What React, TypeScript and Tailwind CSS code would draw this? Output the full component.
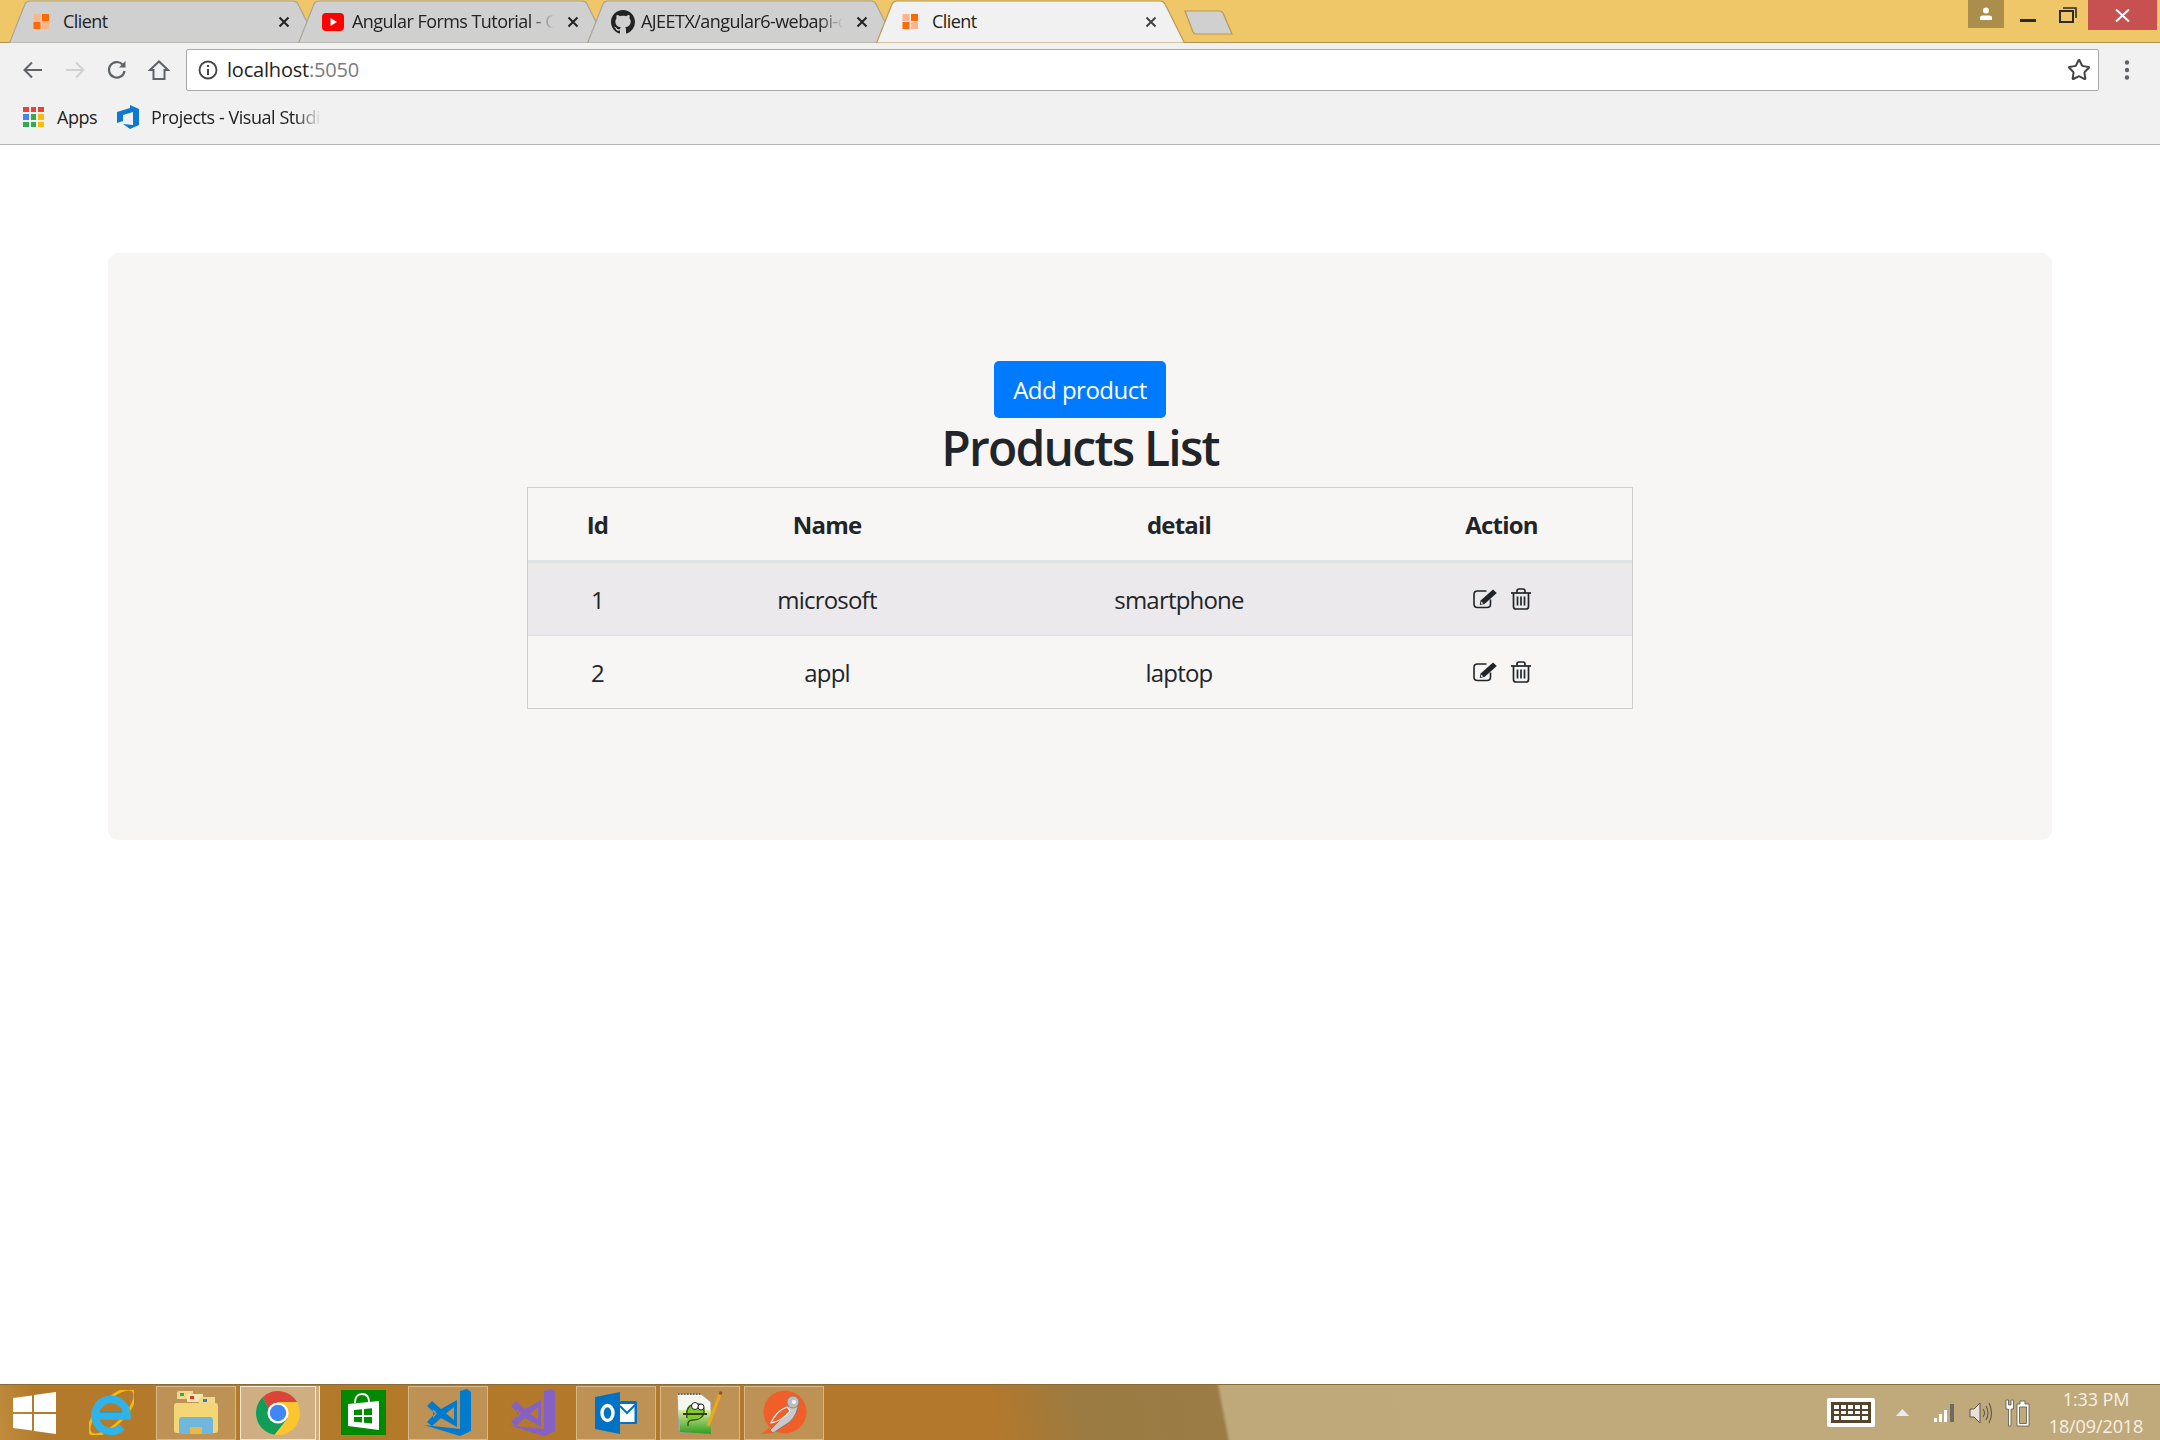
import { Star } from 'lucide-react';

const font = "font-['Open_Sans','Noto_Sans',sans-serif]";

function TabShape({ active }: { active?: boolean }) {
  return (
    <svg className="absolute inset-0 h-[43px] w-[309px]" viewBox="0 0 309 43">
      <path
        d="M0.5 43 L16 4 Q17.5 1 21 1 L284 1 Q287.5 1 289 4 L308.5 43 Z"
        fill={active ? '#f1f1f1' : '#d0d0d0'}
        stroke={active ? '#b79a52' : '#a9a49a'}
        strokeWidth="1.2"
      />
    </svg>
  );
}

function GridFavicon() {
  return (
    <svg width="17" height="15" viewBox="0 0 17 15">
      <rect x="0.5" y="0" width="7" height="7" fill="#ffb48a" />
      <rect x="9" y="0" width="7" height="7" fill="#ff6a00" />
      <rect x="0.5" y="8" width="7" height="7" fill="#ff6a00" />
      <rect x="9" y="8" width="7" height="7" fill="#ffb48a" />
    </svg>
  );
}

function YoutubeFavicon() {
  return (
    <svg width="22" height="18" viewBox="0 0 22 18">
      <rect x="0" y="0" width="22" height="18" rx="4" fill="#f00" />
      <path d="M8.5 5 L15 9 L8.5 13 Z" fill="#fff" />
    </svg>
  );
}

function GithubFavicon() {
  return (
    <svg width="24" height="24" viewBox="0 0 16 16" fill="#222">
      <path d="M8 0C3.58 0 0 3.58 0 8c0 3.54 2.29 6.53 5.47 7.59.4.07.55-.17.55-.38 0-.19-.01-.82-.01-1.49-2.01.37-2.53-.49-2.69-.94-.09-.23-.48-.94-.82-1.13-.28-.15-.68-.52-.01-.53.63-.01 1.08.58 1.23.82.72 1.21 1.87.87 2.33.66.07-.52.28-.87.51-1.07-1.78-.2-3.64-.89-3.64-3.95 0-.87.31-1.59.82-2.15-.08-.2-.36-1.02.08-2.12 0 0 .67-.21 2.2.82.64-.18 1.32-.27 2-.27s1.36.09 2 .27c1.53-1.04 2.2-.82 2.2-.82.44 1.1.16 1.92.08 2.12.51.56.82 1.27.82 2.15 0 3.07-1.87 3.75-3.65 3.95.29.25.54.73.54 1.48 0 1.07-.01 1.93-.01 2.2 0 .21.15.46.55.38A8.01 8.01 0 0 0 16 8c0-4.42-3.58-8-8-8z" />
    </svg>
  );
}

function CloseX({ color = '#222' }: { color?: string }) {
  return (
    <svg width="12" height="12" viewBox="0 0 12 12">
      <path d="M1.5 1.5 L10.5 10.5 M10.5 1.5 L1.5 10.5" stroke={color} strokeWidth="2" />
    </svg>
  );
}

function Tab({
  icon,
  title,
  active,
  fade,
  first,
}: {
  icon: React.ReactNode;
  title: string;
  active?: boolean;
  fade?: boolean;
  first?: boolean;
}) {
  return (
    <div className={`relative h-[43px] w-[309px] shrink-0 ${first ? '' : '-ml-[20px]'} ${active ? 'z-10' : ''}`}>
      <TabShape active={active} />
      <div className={`relative flex h-[43px] items-center pr-[28px] ${active ? 'pl-[26px]' : 'pl-[24px]'}`}>
        <div className="flex w-[30px] shrink-0 items-center">{icon}</div>
        <span
          className={`w-[202px] overflow-hidden whitespace-nowrap text-[18px] tracking-[-0.55px] text-[#222] ${fade ? 'mask-r-from-88%' : ''}`}
        >
          {title}
        </span>
        <div className="ml-auto flex">
          <CloseX color={active ? '#444' : '#222'} />
        </div>
      </div>
    </div>
  );
}

function TitleBar() {
  return (
    <div className="flex h-[43px] border-b border-[#b3944e] bg-[#efc768] pl-[9px]">
      <Tab first icon={<GridFavicon />} title="Client" />
      <Tab icon={<YoutubeFavicon />} title="Angular Forms Tutorial - Create" fade />
      <Tab icon={<GithubFavicon />} title="AJEETX/angular6-webapi-client" fade />
      <Tab active icon={<GridFavicon />} title="Client" />
      <svg className="-ml-[2px] mt-[10px] shrink-0" width="50" height="26" viewBox="0 0 50 26">
        <path
          d="M2 1 L37 1 Q39 1 40 3 L49 24 L13 24 Q11 24 10 22 Z"
          fill="#d0d0d0"
          stroke="#b79a52"
          strokeWidth="1.2"
        />
      </svg>
      <div className="ml-auto flex h-[30px] items-start">
        <div className="flex h-[28px] w-[36px] items-center justify-center bg-[#ab8e4c]">
          <svg width="14" height="14" viewBox="0 0 14 14" fill="#fff">
            <circle cx="7" cy="3.5" r="3" />
            <path d="M1 13 L1 10.5 Q1 8.5 4 8.5 L10 8.5 Q13 8.5 13 10.5 L13 13 Z" />
          </svg>
        </div>
        <div className="flex h-[30px] w-[48px] items-center justify-center pt-[10px]">
          <div className="h-[3px] w-[16px] bg-[#2b2b2b]" />
        </div>
        <div className="flex h-[30px] w-[36px] items-center pl-[7px]">
          <svg width="18" height="16" viewBox="0 0 18 16" fill="none" stroke="#2b2b2b">
            <rect x="1" y="4" width="13" height="11" strokeWidth="2" />
            <path d="M4 1 L17 1 L17 11" strokeWidth="1.6" />
          </svg>
        </div>
        <div className="mr-[3px] flex h-[30px] w-[69px] items-center justify-center bg-[#c75050]">
          <svg width="15" height="13" viewBox="0 0 15 13">
            <path d="M1 0.5 L14 12.5 M14 0.5 L1 12.5" stroke="#fff" strokeWidth="2" />
          </svg>
        </div>
      </div>
    </div>
  );
}

function AddressRow() {
  return (
    <div className="flex h-[53px] items-center pl-[21px] pr-[29px]">
      <svg width="24" height="24" viewBox="0 0 24 24" fill="none" stroke="#5f6368" strokeWidth="2">
        <path d="M21 12 H4 M11 4.5 L3.5 12 L11 19.5" />
      </svg>
      <svg className="ml-[18px]" width="24" height="24" viewBox="0 0 24 24" fill="none" stroke="#cfd0d1" strokeWidth="2">
        <path d="M3 12 H20 M13 4.5 L20.5 12 L13 19.5" />
      </svg>
      <svg className="ml-[18px]" width="24" height="24" viewBox="0 0 24 24" fill="none" stroke="#5f6368" strokeWidth="2.2">
        <path d="M19.5 13 A7.8 7.8 0 1 1 17.5 6.5" />
        <path d="M20.5 3 V9.5 H14 Z" fill="#5f6368" stroke="none" />
      </svg>
      <svg className="ml-[19px]" width="22" height="22" viewBox="0 0 22 22" fill="none" stroke="#5f6368" strokeWidth="2">
        <path d="M2 11 L11 2.5 L20 11 H16.5 V20 H5.5 V11 Z" />
      </svg>
      <div className="ml-[16px] flex h-[42px] flex-1 items-center rounded-[2px] border border-[#a9a9a9] bg-white pl-[11px] pr-[7px]">
        <svg width="20" height="20" viewBox="0 0 20 20" fill="none" stroke="#444">
          <circle cx="10" cy="10" r="8.5" strokeWidth="1.8" />
          <path d="M10 9 V15 M10 5 V7" strokeWidth="2" />
        </svg>
        <span className="ml-[9px] text-[20px] tracking-[-0.2px] text-[#222]">
          localhost<span className="text-[#7b7b7b]">:5050</span>
        </span>
        <Star className="ml-auto text-[#444]" size={24} strokeWidth={2} />
      </div>
      <svg className="ml-[24px]" width="8" height="24" viewBox="0 0 8 24" fill="#5f6368">
        <circle cx="4" cy="4.5" r="2.2" />
        <circle cx="4" cy="12" r="2.2" />
        <circle cx="4" cy="19.5" r="2.2" />
      </svg>
    </div>
  );
}

function BookmarksRow() {
  const dots = ['#ea4335', '#ea4335', '#ea4335', '#4285f4', '#34a853', '#fbbc05', '#34a853', '#34a853', '#fbbc05'];
  return (
    <div className="flex h-[49px] items-center border-b border-[#b5b5b5] pb-[6px] pl-[23px]">
      <div className="grid w-[21px] grid-cols-3 gap-[2px]">
        {dots.map((c, i) => (
          <span key={i} className="h-[5.5px] w-[5.5px]" style={{ background: c }} />
        ))}
      </div>
      <span className="ml-[13px] text-[18px] tracking-[-0.5px] text-[#222]">Apps</span>
      <svg className="ml-[19px]" width="24" height="24" viewBox="0 0 24 24" fill="#0f78d4">
        <path d="M14 0 L23 4 V20 L14 24 L7 19 L17 20 V7 L7 10 V16 L1 18 V7 L14 3 Z" />
      </svg>
      <span className="ml-[11px] w-[170px] overflow-hidden whitespace-nowrap text-[18px] tracking-[-0.45px] text-[#222] mask-r-from-85%">
        Projects - Visual Studio Team Services
      </span>
    </div>
  );
}

function EditIcon() {
  return (
    <svg width="24" height="20" viewBox="0 0 24 20" className="ml-[1px] shrink-0">
      <path
        d="M13.5 2 H4.5 Q1 2 1 5.5 V15 Q1 18.5 4.5 18.5 H14 Q17.5 18.5 17.5 15 V10.5"
        fill="none"
        stroke="#212529"
        strokeWidth="1.6"
      />
      <path d="M20 0.5 L23.8 4 L11.5 15 L6.8 16 L7.6 11.5 Z" fill="#212529" />
      <path d="M8.3 12.6 L8 14.9 L10.4 14.4 Z" fill="#f7f6f5" />
    </svg>
  );
}

function TrashIcon() {
  return (
    <svg width="20" height="22" viewBox="0 0 20 22" fill="none" stroke="#212529" strokeWidth="1.7" className="shrink-0">
      <path d="M0 5 H20" />
      <path d="M6 5 V3 Q6 1 8 1 H12 Q14 1 14 3 V5" />
      <path d="M2.5 5 V18.5 Q2.5 21 5 21 H15 Q17.5 21 17.5 18.5 V5" />
      <path d="M6.5 8.5 V17.5 M10 8.5 V17.5 M13.5 8.5 V17.5" />
    </svg>
  );
}

function ProductRow({ id, name, detail, striped }: { id: number; name: string; detail: string; striped?: boolean }) {
  return (
    <div
      className={`grid grid-cols-[139px_320px_384px_1fr] items-center text-center ${
        striped ? 'h-[73px] border-b border-[#dee2e6] bg-[#ebe9eb]' : 'h-[72px]'
      }`}
    >
      <span className="mt-[2px]">{id}</span>
      <span className="mt-[2px]">{name}</span>
      <span className="mt-[2px]">{detail}</span>
      <div className="flex items-center justify-center gap-[14px]">
        <EditIcon />
        <TrashIcon />
      </div>
    </div>
  );
}

function Content() {
  return (
    <div className="px-[108px] pt-[108px]">
      <div className="flex h-[587px] flex-col items-center rounded-[10px] bg-[#f7f6f5] pt-[108px] text-[24px] tracking-[-0.8px] text-[#212529]">
        <button className="h-[57px] w-[172px] rounded-[5px] bg-[#007bff] pt-[1px] tracking-[-0.5px] text-white">Add product</button>
        <h2 className="mt-[1px] h-[68px] text-[48px] leading-[58px] font-semibold tracking-[-1.75px]">Products List</h2>
        <div className="w-[1106px] border border-[#cfcfcf]">
          <div className="grid h-[75px] grid-cols-[139px_320px_384px_1fr] items-center border-b-[3px] border-[#dee2e6] pt-[2px] text-center font-bold">
            <span>Id</span>
            <span>Name</span>
            <span>detail</span>
            <span>Action</span>
          </div>
          <ProductRow id={1} name="microsoft" detail="smartphone" striped />
          <ProductRow id={2} name="appl" detail="laptop" />
        </div>
      </div>
    </div>
  );
}

function Tile({ children }: { children: React.ReactNode }) {
  return (
    <div className="flex h-[54px] w-[80px] shrink-0 items-center justify-center border border-[#d8b98a] bg-[#bd9254]">
      {children}
    </div>
  );
}

function IeIcon() {
  return (
    <svg className="ml-[33px] shrink-0" width="45" height="45" viewBox="0 0 45 45" fill="none">
      <ellipse cx="23" cy="22" rx="30" ry="12" transform="rotate(-45 23 22)" stroke="#f2b90f" strokeWidth="2.8" />
      <path d="M6 26 H38 A16 16 0 1 0 33 37" stroke="#2fb3e8" strokeWidth="7.5" />
      <path d="M11 22 H33" stroke="#1b9bd6" strokeWidth="1.5" />
    </svg>
  );
}

function ExplorerIcon() {
  return (
    <svg width="46" height="45" viewBox="0 0 46 45">
      <path d="M4 9 V3 Q4 1 6 1 H20 V9 Z" fill="#f1d98c" />
      <path d="M14 12 V6 Q14 4 16 4 H30 V12 Z" fill="#f5e6ad" />
      <path d="M26 14 V9 Q26 7 28 7 H42 V14 Z" fill="#f1d98c" />
      <rect x="7" y="3" width="4" height="3" fill="#3aa655" />
      <rect x="17" y="6" width="4" height="3" fill="#d9392c" />
      <rect x="30" y="9" width="4" height="3" fill="#2a7fd0" />
      <path d="M1 16 Q1 13 4 13 H42 Q45 13 45 16 V40 Q45 43 42 43 H4 Q1 43 1 40 Z" fill="#f3d777" />
      <path d="M6 44 V30 Q6 27 9 27 H37 Q40 27 40 30 V44 H29 V37 H17 V44 Z" fill="#6fb7dc" />
      <rect x="17" y="37" width="12" height="7" fill="#e9b94c" />
    </svg>
  );
}

function ChromeIcon() {
  return (
    <svg width="46" height="46" viewBox="0 0 48 48">
      <path d="M8 7.5 A23 23 0 0 1 43.9 12.5 H24 L14 18.5 Z" fill="#db4437" />
      <path d="M8 7.5 A23 23 0 0 0 20.5 46.7 L34 29.8 L14 18.5 Z" fill="#0f9d58" />
      <path d="M43.9 12.5 A23 23 0 0 1 20.5 46.7 L34 29.8 L24 12.5 Z" fill="#fbc52f" />
      <circle cx="24" cy="24" r="11" fill="#fff" />
      <circle cx="24" cy="24" r="8.6" fill="#4285f4" />
    </svg>
  );
}

function StoreIcon() {
  return (
    <div className="ml-[21px] flex h-[45px] w-[45px] shrink-0 items-center justify-center bg-[#008a00]">
      <svg width="45" height="45" viewBox="0 0 45 45" fill="#fff">
        <path d="M7 14 L38 11 V40 L7 36 Z" />
        <path d="M14 13 Q14 4 21 4 Q28 4 28 12" fill="none" stroke="#fff" strokeWidth="1.8" />
        <path d="M13 20 L21 19.3 V25 H13 Z M23 19 L31 18.3 V25 H23 Z M13 27 H21 V32.5 L13 31.8 Z M23 27 H31 V33.5 L23 32.8 Z" fill="#008a00" />
      </svg>
    </div>
  );
}

const vsPath =
  'M36 2 L43 0 L47 3 V42 L36 47 L0 36 L36 40 Z M3 17 L8 12 L17 20 L33 11 V38 L17 29 L8 37 L3 33 L11 24.5 Z M9 20 V29 L13 24.5 Z M22 24.5 L30 31 V18 Z';

function OutlookIcon() {
  return (
    <svg width="42" height="42" viewBox="0 0 42 42">
      <path d="M0 5 L25 0 V42 L0 37 Z" fill="#0072c6" />
      <rect x="25" y="9" width="17" height="23" rx="1.5" fill="#0072c6" />
      <rect x="25" y="12" width="14.5" height="18" fill="#fff" />
      <path d="M25 14 L32 21 L40 13" fill="none" stroke="#0072c6" strokeWidth="2" />
      <ellipse cx="12.5" cy="21" rx="5.5" ry="7.5" fill="none" stroke="#fff" strokeWidth="3.4" />
    </svg>
  );
}

function NotepadIcon() {
  return (
    <svg width="46" height="46" viewBox="0 0 46 46">
      <defs>
        <linearGradient id="npp" x1="0" y1="0" x2="0" y2="1">
          <stop offset="0" stopColor="#d9ee9a" />
          <stop offset="1" stopColor="#2f9b1f" />
        </linearGradient>
      </defs>
      <path d="M0 4 H24 L34 12 V44 L2 42 Z" fill="#f6f6f0" stroke="#9a9a9a" />
      <path d="M1 4 H24" stroke="#666" strokeWidth="2" strokeDasharray="1.5 1.5" />
      <path d="M1.5 20 H34 V44 L2.5 42 Z" fill="url(#npp)" />
      <path d="M10 28 Q8 14 20 14 Q28 14 27 22 Q26 30 16 30 Q10 30 11 36" fill="#7ecb2a" stroke="#2f4d10" strokeWidth="1.4" />
      <circle cx="18" cy="16" r="3.5" fill="#fff" stroke="#222" />
      <circle cx="24" cy="17" r="3" fill="#fff" stroke="#222" />
      <path d="M6 24 H30" stroke="#3a3a1a" strokeWidth="2" />
      <path d="M31 36 L43 4" stroke="#e8a820" strokeWidth="3.4" />
      <path d="M41.5 4 L43 1 L45.5 2 L44.5 5 Z" fill="#a5423a" />
    </svg>
  );
}

function PostmanIcon() {
  return (
    <svg width="46" height="46" viewBox="0 0 46 46">
      <circle cx="24" cy="22" r="21.5" fill="#f05f2a" />
      <path d="M30 10 L37 17 Q34 30 24 35 L12 43 L9 40 L18 31 Q26 22 30 10 Z" fill="#c9c9c9" stroke="#6b6b6b" strokeWidth="0.7" />
      <path d="M26 17 Q15 21 10 33 Q21 31 29 21 Z" fill="#f05f2a" stroke="#fff" strokeWidth="1.2" />
      <circle cx="32" cy="12" r="6" fill="#bdbdbd" stroke="#777" strokeWidth="0.7" />
      <circle cx="33" cy="12" r="2" fill="#fff" />
      <path d="M0 44 L8 38 L12 43 Z" fill="#f05f2a" />
    </svg>
  );
}

function Taskbar() {
  return (
    <div className="flex h-[56px] items-center border-t border-[#8a6a35] bg-[linear-gradient(79deg,#c08c3e_0%,#b47a2b_2%,#b3782b_46%,#9b7b42_50%,#9a7c44_56.5%,#bfa87a_56.7%,#c0aa7c_100%)] pr-[14px]">
      <svg className="ml-[13px] shrink-0" width="43" height="42" viewBox="0 0 43 42" fill="#fff">
        <path d="M0 6 L19 3.5 V20 H0 Z M21 3 L43 0 V20 H21 Z M0 22 H19 V38.5 L0 36 Z M21 22 H43 V42 L21 39 Z" />
      </svg>
      <IeIcon />
      <div className="ml-[22px]">
        <Tile>
          <ExplorerIcon />
        </Tile>
      </div>
      <div className="ml-[4px] flex h-[54px] shrink-0">
        <div className="flex w-[76px] items-center justify-center border border-[#f4ead8] bg-[#cfae82]">
          <ChromeIcon />
        </div>
        <div className="w-[4px] border-r border-[#f4ead8] bg-[#cfae82]" />
      </div>
      <StoreIcon />
      <div className="ml-[22px]">
        <Tile>
          <svg width="48" height="47" viewBox="0 0 48 47" fill="#007acc" fillRule="evenodd">
            <path d={vsPath} />
          </svg>
        </Tile>
      </div>
      <svg className="ml-[20px] shrink-0" width="48" height="47" viewBox="0 0 48 47" fill="#8661c5" fillRule="evenodd">
        <path d={vsPath} />
      </svg>
      <div className="ml-[20px]">
        <Tile>
          <OutlookIcon />
        </Tile>
      </div>
      <div className="ml-[4px]">
        <Tile>
          <NotepadIcon />
        </Tile>
      </div>
      <div className="ml-[4px]">
        <Tile>
          <PostmanIcon />
        </Tile>
      </div>
      <div className="ml-auto flex items-center">
        <div className="flex h-[29px] w-[48px] items-center justify-center rounded-[2px] bg-white">
          <svg width="40" height="21" viewBox="0 0 40 21" fill="#55452c" fillRule="evenodd">
            <path d="M0 0 H40 V21 H0 Z M3 3 V7 H8 V3 Z M10 3 V7 H15 V3 Z M17 3 V7 H22 V3 Z M24 3 V7 H29 V3 Z M31 3 V7 H37 V3 Z M3 9 V12 H8 V9 Z M10 9 V12 H15 V9 Z M17 9 V12 H22 V9 Z M24 9 V12 H29 V9 Z M31 9 V12 H37 V9 Z M3 14 V18 H8 V14 Z M10 14 V18 H29 V14 Z M31 14 V18 H37 V14 Z" />
          </svg>
        </div>
        <svg className="ml-[21px] shrink-0" width="13" height="7" viewBox="0 0 13 7" fill="#e8ebf2">
          <path d="M6.5 0 L13 7 H0 Z" />
        </svg>
        <svg className="ml-[25px] shrink-0" width="21" height="18" viewBox="0 0 21 18">
          <path d="M0 14 H3 V18 H0 Z M5 10 H8 V18 H5 Z M10 6 H13 V18 H10 Z" fill="#fff" />
          <path d="M16 0 H20 V18 H16 Z" fill="#6e6a62" />
        </svg>
        <svg className="ml-[14px] shrink-0" width="24" height="26" viewBox="0 0 24 26" fill="none" stroke="#fff" strokeWidth="1.5">
          <path d="M1 9 H5 L11 3 V23 L5 17 H1 Z" fill="#e6e2d8" stroke="#5c5548" strokeWidth="1" />
          <path d="M14 9 Q17 13 14 17 M17 6 Q21 13 17 20 M20 3 Q25 13 20 23" stroke="#5c5548" strokeWidth="1.1" />
        </svg>
        <svg className="ml-[12px] shrink-0" width="25" height="28" viewBox="0 0 25 28" fill="#fff" stroke="#5c5548" strokeWidth="0.8">
          <path d="M1 1 H3.5 V6 H6 V1 H8.5 V10 H6 V27 H3.5 V10 H1 Z" />
          <path d="M12 5 H15 V2 H20 V5 H24 V27 H12 Z M14.5 8 V24.5 H21.5 V8 Z" fillRule="evenodd" />
        </svg>
        <div className="ml-[16px] flex w-[100px] flex-col items-center text-[18px] leading-[27px] tracking-[-0.1px] text-[#f6f1e4]">
          <span>1:33 PM</span>
          <span>18/09/2018</span>
        </div>
      </div>
    </div>
  );
}

export default function App() {
  return (
    <div className={`flex h-[1440px] w-[2160px] flex-col overflow-hidden bg-white ${font}`}>
      <div className="bg-[#f1f1f1]">
        <TitleBar />
        <AddressRow />
        <BookmarksRow />
      </div>
      <div className="flex-1">
        <Content />
      </div>
      <Taskbar />
    </div>
  );
}
